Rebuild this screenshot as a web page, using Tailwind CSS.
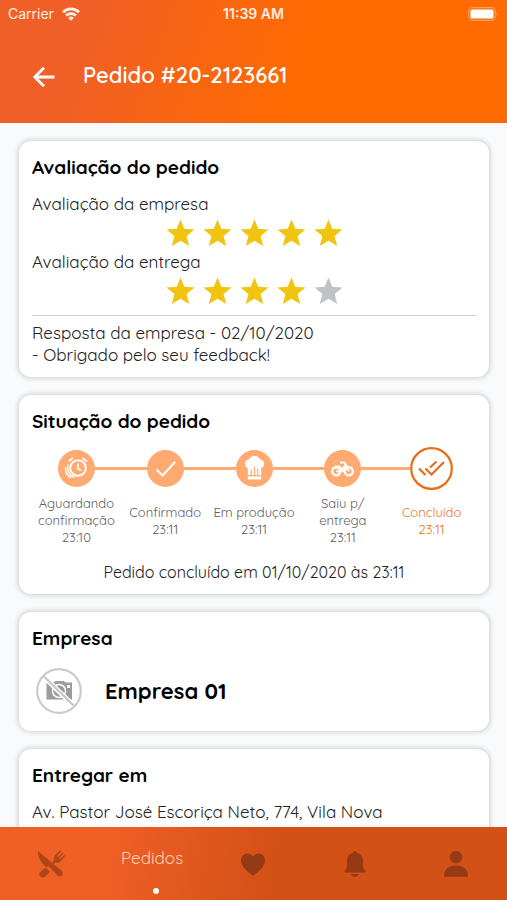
<!DOCTYPE html>
<html lang="pt-BR">
<head>
<meta charset="utf-8">
<meta name="viewport" content="width=device-width, initial-scale=1">
<title>Pedido #20-2123661</title>
<script src="https://cdn.jsdelivr.net/npm/@tailwindcss/browser@4"></script>
</head>
<body class="flex h-screen flex-col overflow-hidden bg-[#f8fafc] font-[Quicksand,Lato,sans-serif] text-[#222]">
<svg class="hidden" aria-hidden="true">
  <symbol id="star" viewBox="0 0 30 28"><path d="M15 0l3.900 9.600 10.600.8-8.200 6.700 2.700 10.400L15 21.900 6 27.500l2.700-10.400L.5 10.400l10.600-.8z"/></symbol>
</svg>

<header class="shrink-0 bg-linear-[110deg] from-[#ef5f27] from-15% to-[#ff6b00] to-60% pb-7 text-white">
  <div class="grid h-7 grid-cols-3 items-center px-2 font-[Inter,sans-serif] text-sm text-[#ffeee4]">
    <div class="flex items-center gap-2">
      <span>Carrier</span>
      <svg class="h-[14px] w-[18px]" viewBox="0 0 18 14" fill="none" stroke="currentColor" stroke-width="2.800"><path d="M1 5.200a11.500 11.500 0 0 1 16 0M4 8.600a7.200 7.200 0 0 1 10 0"/><path d="M9 13.700L6.200 10.900a4 4 0 0 1 5.600 0z" fill="currentColor" stroke="none"/></svg>
    </div>
    <span class="text-center font-semibold">11:39 AM</span>
    <svg class="h-[14px] w-[31px] justify-self-end" viewBox="0 0 31 14"><rect x=".7" y=".7" width="26.600" height="12.600" rx="3.500" fill="none" stroke="#ff9d57" stroke-width="1.300"/><rect x="2.500" y="2.500" width="23" height="9" rx="1.500" fill="#fff"/><path d="M28.800 4.800q2 2.200 0 4.400z" fill="#ffb27b"/></svg>
  </div>
  <div class="mt-[27px] flex h-10 items-center gap-[26px] pl-[33px]">
    <button type="button" aria-label="Voltar"><svg class="mt-1 h-6 w-6" viewBox="0 0 24 24" fill="none" stroke="#fff" stroke-width="2.800"><path d="M21.500 12H2M11 2.800L1.800 12l9.200 9.200"/></svg></button>
    <h1 class="text-[22px] font-semibold">Pedido #20-2123661</h1>
  </div>
</header>

<main class="flex min-h-0 flex-1 flex-col gap-[18px] overflow-hidden pt-[18px] pr-[18px] pl-[19px] text-[17px] leading-[22px]">
  <section class="shrink-0 rounded-xl bg-white px-[13px] pt-[14px] pb-[11px] shadow-[0_0_5px_1px_#c9cccc]">
    <h2 class="mb-[14px] text-[19px] leading-6 font-bold text-black">Avaliação do pedido</h2>
    <p>Avaliação da empresa</p>
    <div class="flex h-9 items-center justify-center gap-2 fill-[#f1c40f]" role="img" aria-label="5 de 5 estrelas">
      <svg class="h-7 w-[29px]"><use href="#star"/></svg><svg class="h-7 w-[29px]"><use href="#star"/></svg><svg class="h-7 w-[29px]"><use href="#star"/></svg><svg class="h-7 w-[29px]"><use href="#star"/></svg><svg class="h-7 w-[29px]"><use href="#star"/></svg>
    </div>
    <p>Avaliação da entrega</p>
    <div class="flex h-9 items-center justify-center gap-2 fill-[#f1c40f]" role="img" aria-label="4 de 5 estrelas">
      <svg class="h-7 w-[29px]"><use href="#star"/></svg><svg class="h-7 w-[29px]"><use href="#star"/></svg><svg class="h-7 w-[29px]"><use href="#star"/></svg><svg class="h-7 w-[29px]"><use href="#star"/></svg><svg class="h-7 w-[29px] fill-[#bdc3c7]"><use href="#star"/></svg>
    </div>
    <hr class="my-[6px] border-[#cfcfcf]">
    <p>Resposta da empresa - 02/10/2020</p>
    <p>- Obrigado pelo seu feedback!</p>
  </section>

  <section class="shrink-0 rounded-xl bg-white px-[13px] pt-[14px] pb-[11px] shadow-[0_0_5px_1px_#c9cccc]">
    <h2 class="mb-[13px] text-[19px] leading-6 font-bold text-black">Situação do pedido</h2>
    <ol class="grid grid-cols-5 text-center text-[13px] leading-[17px] text-[#606060]">
      <li>
        <div class="flex h-11 items-center"><span class="flex-1"></span>
          <svg class="h-[37px] w-[37px]" viewBox="0 0 37 37" fill="none" stroke="#fff" stroke-width="1.900"><circle cx="18.500" cy="18.500" r="18.500" fill="#ffaa70" stroke="none"/><circle cx="20" cy="18" r="7.800"/><path d="M19.800 13.500v5l3 2M10.800 11.200l4-3.200M24.500 8l4.500 3.500" stroke-width="1.800"/><path d="M10 14.500a10.500 10.500 0 0 0 6.500 13" stroke-width="1.500"/><path d="M7.600 17a11 11 0 0 0 5.600 11" stroke-width="1.400"/></svg>
          <span class="h-[3px] flex-1 bg-[#ffaa70]"></span></div>
        <p class="mt-[5px] flex h-[51px] flex-col justify-center"><span>Aguardando</span><span>confirmação</span><span>23:10</span></p>
      </li>
      <li>
        <div class="flex h-11 items-center"><span class="h-[3px] flex-1 bg-[#ffaa70]"></span>
          <svg class="h-[37px] w-[37px]" viewBox="0 0 37 37" fill="none" stroke="#fff" stroke-width="2"><circle cx="18.500" cy="18.500" r="18.500" fill="#ffaa70" stroke="none"/><path d="M9.500 19.500l6 6L28 12"/></svg>
          <span class="h-[3px] flex-1 bg-[#ffaa70]"></span></div>
        <p class="mt-[5px] flex h-[51px] flex-col justify-center"><span>Confirmado</span><span>23:11</span></p>
      </li>
      <li>
        <div class="flex h-11 items-center"><span class="h-[3px] flex-1 bg-[#ffaa70]"></span>
          <svg class="h-[37px] w-[37px]" viewBox="0 0 37 37"><circle cx="18.500" cy="18.500" r="18.500" fill="#ffaa70"/><path fill="#fff" d="M11.800 25V17.900A4.400 4.400 0 0 1 12.800 9.400 6.500 6.500 0 0 1 24.200 9.400 4.400 4.400 0 0 1 25.200 17.900V25zM11.800 26.300h13.400V29.500h-13.400z"/><path d="M15.300 19.500V25M18.500 16.500V25M21.700 18.500V25" stroke="#ffaa70" stroke-width="1.200"/></svg>
          <span class="h-[3px] flex-1 bg-[#ffaa70]"></span></div>
        <p class="mt-[5px] flex h-[51px] flex-col justify-center whitespace-nowrap"><span>Em produção</span><span>23:11</span></p>
      </li>
      <li>
        <div class="flex h-11 items-center"><span class="h-[3px] flex-1 bg-[#ffaa70]"></span>
          <svg class="h-[37px] w-[37px]" viewBox="0 0 37 37" fill="none" stroke="#fff" stroke-width="2.400"><circle cx="18.500" cy="18.500" r="18.500" fill="#ffaa70" stroke="none"/><circle cx="12.200" cy="21.200" r="4"/><circle cx="24.800" cy="21.200" r="4"/><path d="M12.200 21.200h5.800l3-5.300 4 5.300M16 12.400h4.300l3 4.300" stroke-width="2"/><path d="M10 15.500h6l2 2.500 2.500-3.300 3 1.500-3.500 5.800h-3.500l-2-4.500z" fill="#fff" stroke="none"/></svg>
          <span class="h-[3px] flex-1 bg-[#ffaa70]"></span></div>
        <p class="mt-[5px] flex h-[51px] flex-col justify-center"><span>Saiu p/</span><span>entrega</span><span>23:11</span></p>
      </li>
      <li>
        <div class="flex h-11 items-center"><span class="h-[3px] flex-1 bg-[#ffaa70]"></span>
          <svg class="h-[43px] w-[43px]" viewBox="0 0 43 43" fill="none" stroke="#ea6c17" stroke-width="2.200"><circle cx="21.500" cy="21.500" r="20.300"/><path d="M9 21.500l6.500 6.500M15.500 21.500l6 6L34 15M20 20.500l6.500-6"/></svg>
          <span class="flex-1"></span></div>
        <p class="mt-[5px] flex h-[51px] flex-col justify-center text-[#f37318]"><span>Concluído</span><span>23:11</span></p>
      </li>
    </ol>
    <p class="mt-[15px] text-center text-base leading-[22px]">Pedido concluído em 01/10/2020 às 23:11</p>
  </section>

  <section class="shrink-0 rounded-xl bg-white px-[13px] pt-[14px] pb-[17px] shadow-[0_0_5px_1px_#c9cccc]">
    <h2 class="mb-[18px] text-[19px] leading-6 font-bold text-black">Empresa</h2>
    <div class="flex items-center gap-[23px] pl-1">
      <svg class="h-[46px] w-[46px]" viewBox="0 0 46 46" fill="none"><path d="M10.500 14.500h7l2-1.500h8.500l1.500 1.500h6.500v17h-25.500z" fill="#9c9c9c"/><circle cx="23" cy="23" r="6.500" stroke="#fff" stroke-width="1.500"/><path d="M31 17h3v3h-3z" fill="#fff"/><path d="M7 8l31.500 30.500" stroke="#fff" stroke-width="5"/><path d="M7 7.500l31.500 31" stroke="#c8c8c8" stroke-width="2.300"/><circle cx="23" cy="23" r="21.800" stroke="#cbcbcb" stroke-width="2.200"/></svg>
      <strong class="text-[22px] font-bold text-black">Empresa 01</strong>
    </div>
  </section>

  <section class="shrink-0 rounded-xl bg-white px-[13px] pt-[14px] pb-[17px] shadow-[0_0_5px_1px_#c9cccc]">
    <h2 class="mb-[14px] text-[19px] leading-6 font-bold text-black">Entregar em</h2>
    <p>Av. Pastor José Escoriça Neto, 774, Vila Nova</p>
  </section>
</main>

<nav class="grid h-[73px] shrink-0 grid-cols-5 bg-linear-[100deg] from-[#f06025] from-20% to-[#d35017] to-55% text-[#943a14]">
  <a href="#" aria-label="Restaurantes" class="flex items-center justify-center text-[#ad4617]"><svg class="h-[30px] w-[30px]" viewBox="0 0 30 30" fill="currentColor"><path d="M2 2C1.500 7 5 14 10 18l3-.5 8.500 9q2.500 2 4.500-.2 1.500-2 0-4z"/><path d="M9.500 18.500l4.500 4.200-5 5q-2.500 1.800-4.800-.3-2-2.200 0-4.400zM16 14l2-2.500c-.8-2.800.2-4.500 2-6.300L24 1.500l1 1-4 4.500 1 1 4.500-4.500 1 1L23 9l1 1 4.500-4 .5 1-3.500 4.500c-2 2-4 2.800-6.200 2L17.500 15.500z"/></svg></a>
  <a href="#" aria-current="page" class="flex flex-col items-center pt-5 text-[17px] leading-[22px] text-[#ffd0b5]">Pedidos<span class="mt-[19px] ml-2 h-[6px] w-[6px] rounded-full bg-white"></span></a>
  <a href="#" aria-label="Favoritos" class="flex items-center justify-center"><svg class="h-6 w-6" viewBox="0 0 24 24" fill="currentColor"><path d="M12 23.500C8 21 0 15 0 8.200 0 4.500 2.800 1.500 6.500 1.500c2.500 0 4.500 1.300 5.500 3.200 1-1.900 3-3.200 5.500-3.200C21.200 1.500 24 4.500 24 8.200 24 15 16 21 12 23.500z"/></svg></a>
  <a href="#" aria-label="Notificações" class="flex items-center justify-center"><svg class="h-[26px] w-[22px]" viewBox="0 0 22 26" fill="currentColor"><path d="M11 0q1.800 0 2.200 1.800C17.500 3 19 6.500 19 10v5.500c0 2 2.500 3.500 2.500 5.200 0 .5-.4.900-1 .9H1.500c-.6 0-1-.4-1-.9 0-1.700 2.500-3.200 2.500-5.200V10c0-3.500 1.500-7 5.800-8.200Q9.200 0 11 0zM7 23h8q-1.200 3-4 3t-4-3z"/></svg></a>
  <a href="#" aria-label="Perfil" class="flex items-center justify-center"><svg class="h-[26px] w-6" viewBox="0 0 24 26" fill="currentColor"><circle cx="12" cy="6.200" r="6.200"/><path d="M0 24.500C0 18.500 5 14.500 12 14.500s12 4 12 10q0 1.200-1.200 1.200H1.200Q0 25.700 0 24.500z"/></svg></a>
</nav>
</body>
</html>
